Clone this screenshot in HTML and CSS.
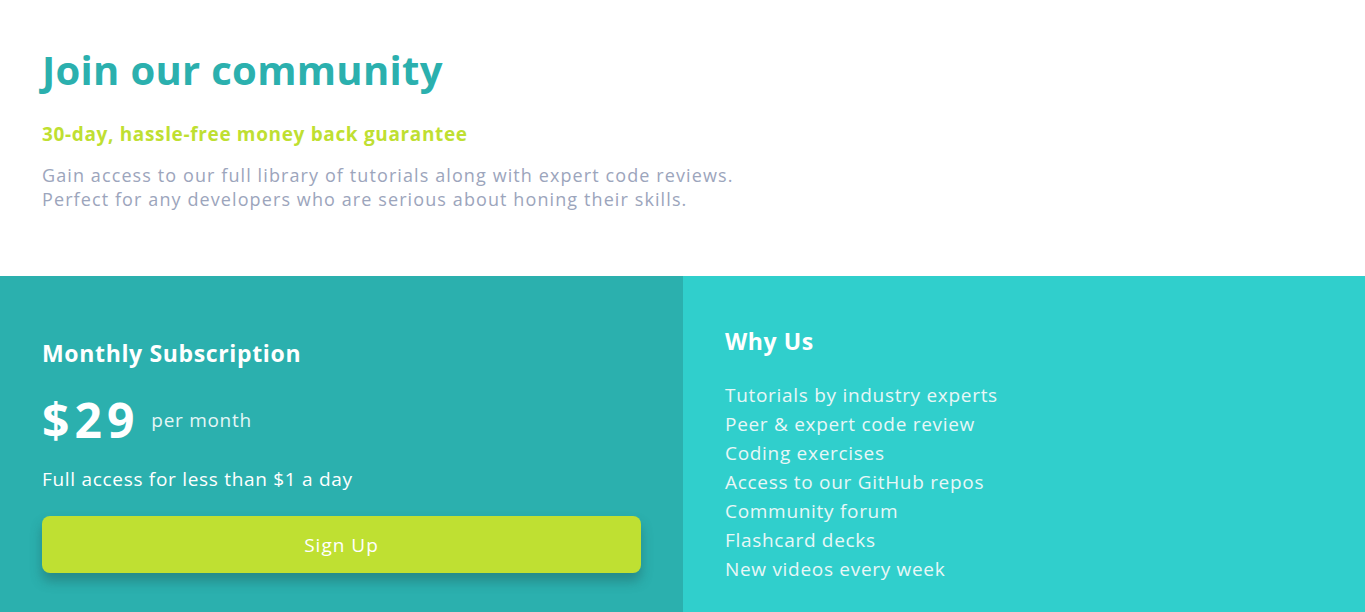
FILE: index.html
```html
<!DOCTYPE html>
<html lang="en">
<head>
<meta charset="utf-8">
<title>Single price grid</title>
<link rel="stylesheet" href="styles.css">
</head>
<body>
<main class="card">
  <section class="intro">
    <h1 class="title">Join our community</h1>
    <h2 class="guarantee">30-day, hassle-free money back guarantee</h2>
    <p class="desc">Gain access to our full library of tutorials along with expert code reviews.<br>Perfect for any developers who are serious about honing their skills.</p>
  </section>
  <div class="bottom">
    <section class="sub">
      <h3 class="sub-title">Monthly Subscription</h3>
      <div class="price-row">
        <span class="price">$29</span>
        <span class="per">per month</span>
      </div>
      <p class="access">Full access for less than $1 a day</p>
      <button class="signup">Sign Up</button>
    </section>
    <section class="why">
      <h3 class="why-title">Why Us</h3>
      <ul class="why-list">
        <li>Tutorials by industry experts</li>
        <li>Peer &amp; expert code review</li>
        <li>Coding exercises</li>
        <li>Access to our GitHub repos</li>
        <li>Community forum</li>
        <li>Flashcard decks</li>
        <li>New videos every week</li>
      </ul>
    </section>
  </div>
</main>
</body>
</html>
```
FILE: styles.css
```css
* { box-sizing: border-box; }
html, body { margin: 0; padding: 0; }
body {
  font-family: "Open Sans", "Lato", sans-serif;
  background: #ffffff;
}
.card { display: flex; flex-direction: column; }
.intro {
  height: 276px;
  padding: 46px 42px 0;
}
.title {
  margin: 0;
  font-size: 40px;
  font-weight: 700;
  color: #2bb0ae;
  line-height: 48px;
  letter-spacing: 0.3px;
}
.guarantee {
  margin: 28px 0 0;
  font-size: 19px;
  font-weight: 700;
  color: #bfdf32;
  line-height: 24px;
  letter-spacing: 0.65px;
}
.desc {
  margin: 17px 0 0;
  font-size: 18px;
  line-height: 24px;
  color: #9ca5bc;
  letter-spacing: 1.1px;
}
.bottom {
  display: grid;
  grid-template-columns: 683px 1fr;
  height: 336px;
}
.sub {
  background: #2bb0ae;
  padding: 62px 42px 0;
  color: #ffffff;
}
.sub-title {
  margin: 0;
  font-size: 23px;
  font-weight: 700;
  line-height: 30px;
  letter-spacing: 0.65px;
}
.price-row {
  display: flex;
  align-items: center;
  gap: 12px;
  margin-top: 24px;
}
.price {
  font-size: 48px;
  font-weight: 700;
  line-height: 56px;
  letter-spacing: 5px;
}
.per {
  font-size: 19px;
  color: #e4f6f6;
  margin-top: 0;
  letter-spacing: 0.7px;
}
.access {
  margin: 18px 0 0;
  font-size: 19px;
  line-height: 26px;
  letter-spacing: 0.7px;
}
.signup {
  display: block;
  width: 100%;
  height: 57px;
  margin-top: 24px;
  border: 0;
  border-radius: 8px;
  background: #bfe032;
  color: #ffffff;
  font-family: inherit;
  font-size: 19px;
  letter-spacing: 1px;
  box-shadow: 0 8px 12px rgba(30, 90, 90, 0.45);
}
.why {
  background: #30cfcc;
  padding: 50px 42px 0;
  color: #ffffff;
}
.why-title {
  margin: 0;
  font-size: 23px;
  font-weight: 700;
  line-height: 30px;
  letter-spacing: 0.6px;
}
.why-list {
  list-style: none;
  margin: 25px 0 0;
  padding: 0;
  font-size: 19px;
  line-height: 29px;
  color: #e8f7f7;
  letter-spacing: 0.7px;
}
```
